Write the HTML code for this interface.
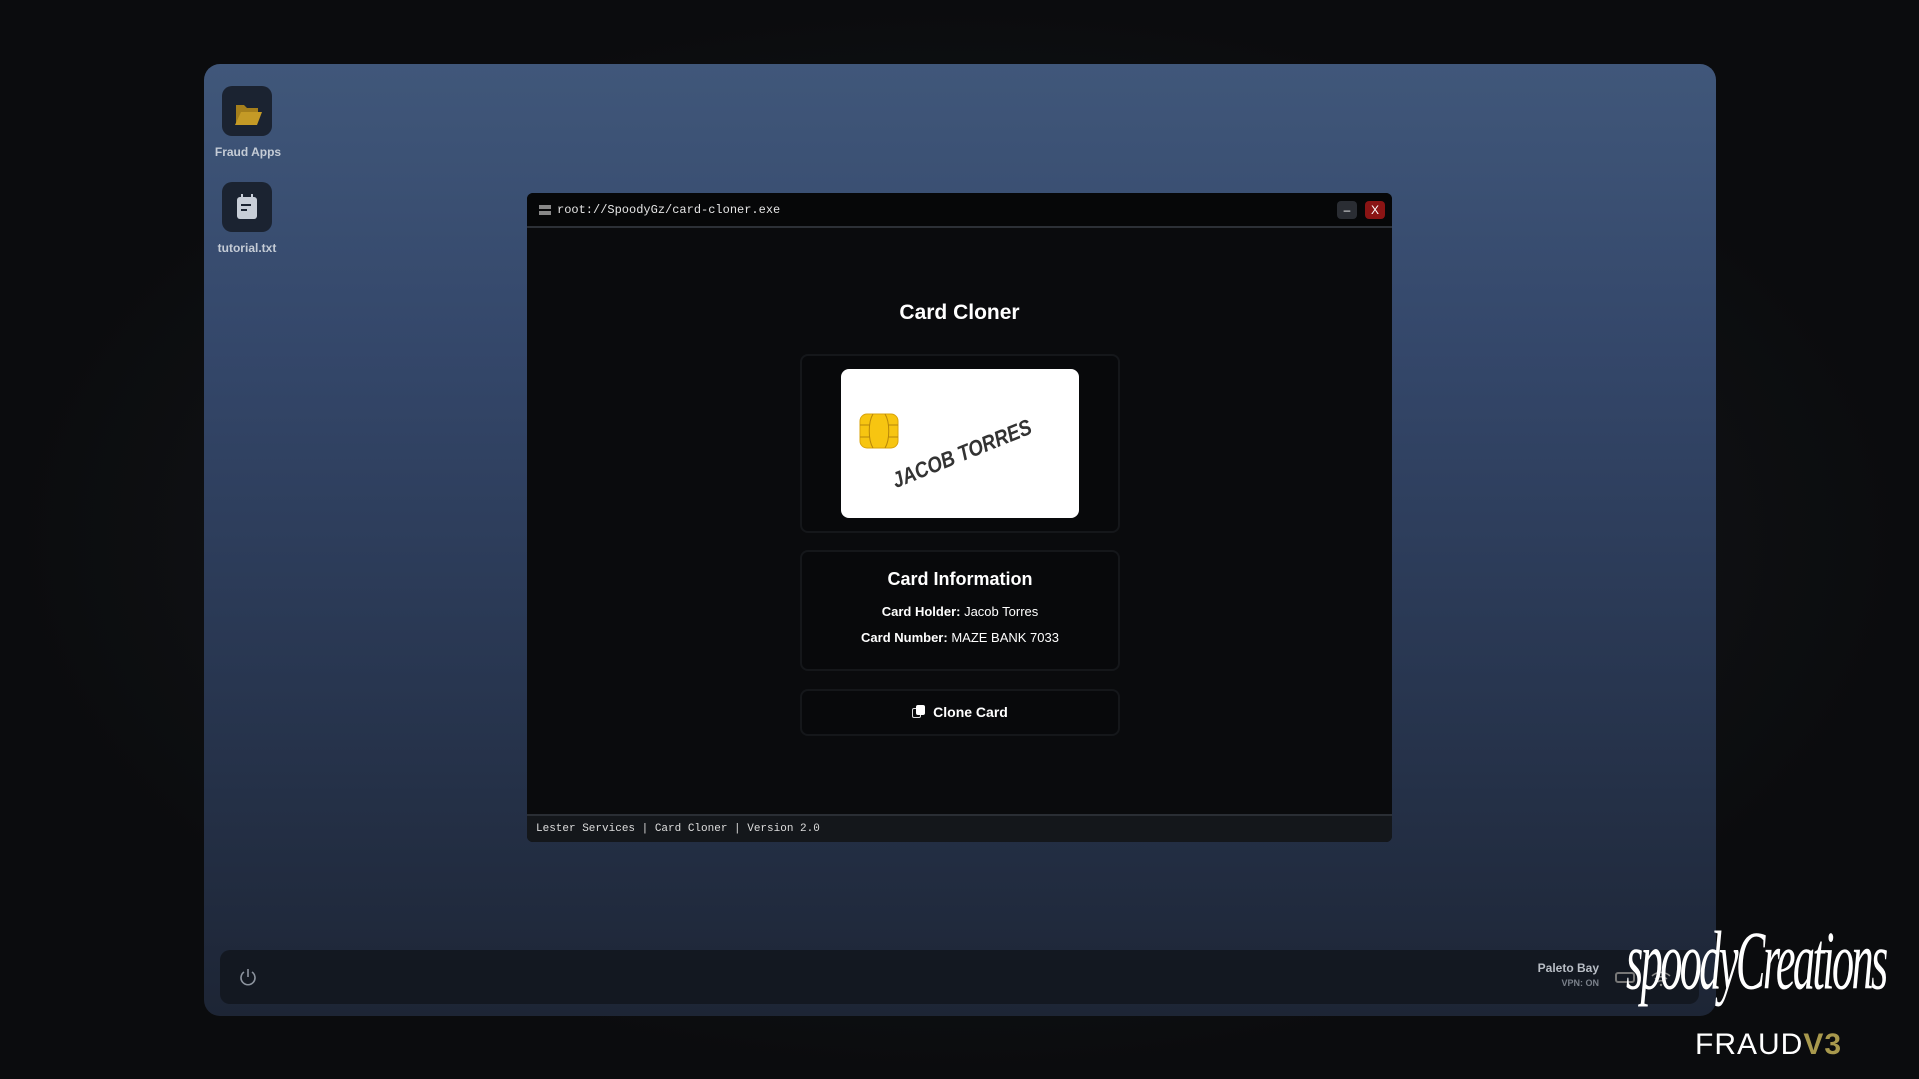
<!DOCTYPE html>
<html><head><meta charset="utf-8"><style>
*{margin:0;padding:0;box-sizing:border-box}
body{width:1919px;height:1079px;overflow:hidden;background:radial-gradient(ellipse at 50% 50%,#1a1d22 0%,#0b0c0e 70%);font-family:"Liberation Sans",sans-serif;position:relative}
.desk{position:absolute;left:204px;top:64px;width:1512px;height:952px;border-radius:16px;background:linear-gradient(180deg,#40577a 0%,#34476a 30%,#283650 65%,#1d2535 100%)}
.ic{position:absolute;width:50px;height:50px;border-radius:10px;background:#1b2331}
.lbl{position:absolute;color:#c5ccd6;font-weight:bold;font-size:12px;text-align:center;width:90px}
.win{position:absolute;left:527px;top:193px;width:865px;height:649px;background:#0a0b0d;border-radius:6px;overflow:hidden}
.tb{height:35px;background:#060708;border-bottom:2px solid #2c3036;display:flex;align-items:center;padding-left:12px;color:#e6e6e6;font-family:"Liberation Mono",monospace;font-size:12px}
.btn{position:absolute;top:8px;width:20px;height:18px;border-radius:4px;color:#fff;font-size:12px;text-align:center;line-height:18px}
.box{position:absolute;left:273px;width:320px;border:2px solid #15171a;border-radius:8px;background:#08090b}
.foot{position:absolute;left:0;bottom:0;width:100%;height:28px;background:#14171b;border-top:2px solid #2a2e34;color:#ddd;font-family:"Liberation Mono",monospace;font-size:11px;padding:7px 9px}
.task{position:absolute;left:220px;top:950px;width:1479px;height:54px;background:#131821;border-radius:10px}
</style></head><body>
<div class="desk"></div>
<div class="ic" style="left:222px;top:86px"><svg width="50" height="50"><path d="M14 19h8l3 3h11v4H20l-6 12z" fill="#a57f1c"/><path d="M19 26h21l-5 13H13z" fill="#c49a26"/></svg></div>
<div class="lbl" style="left:203px;top:145px">Fraud Apps</div>
<div class="ic" style="left:222px;top:182px"><svg width="50" height="50"><rect x="15" y="15" width="20" height="22" rx="3" fill="#c8ced8"/><rect x="19" y="12" width="2" height="5" fill="#c8ced8"/><rect x="29" y="12" width="2" height="5" fill="#c8ced8"/><rect x="19" y="22" width="10" height="2" fill="#1b2331"/><rect x="19" y="27" width="6" height="2" fill="#1b2331"/></svg></div>
<div class="lbl" style="left:202px;top:241px">tutorial.txt</div>
<div class="win">
 <div class="tb"><span style="display:inline-block;width:12px;height:10px;border-top:4px solid #888;border-bottom:4px solid #888;margin-right:6px"></span>root://SpoodyGz/card-cloner.exe</div>
 <div class="btn" style="left:810px;background:#2a2d33">–</div>
 <div class="btn" style="left:838px;background:#8a1414">X</div>
 <div style="position:absolute;top:108px;width:100%;text-align:center;color:#fff;font-weight:bold;font-size:21px">Card Cloner</div>
 <div class="box" style="top:161px;height:179px">
  <div style="position:absolute;left:39px;top:13px;width:238px;height:149px;background:#fff;border-radius:8px;overflow:hidden">
   <svg width="40" height="36" style="position:absolute;left:18px;top:44px"><rect x="1" y="1" width="38" height="34" rx="7" fill="#f7c511" stroke="#d9a30a"/><path d="M14 1c-5 8-5 26 0 34M26 1c5 8 5 26 0 34M1 12h10M1 24h10M29 12h10M29 24h10" stroke="#b7860a" fill="none"/></svg>
   <div style="position:absolute;left:0;width:238px;top:72px;text-align:center;transform:translateX(2px) rotate(-22deg) scaleX(0.85);transform-origin:center center;font-family:'Liberation Sans',sans-serif;font-style:italic;font-weight:bold;font-size:22px;line-height:26px;color:#333;white-space:nowrap">JACOB TORRES</div>
  </div>
 </div>
 <div class="box" style="top:357px;height:121px;text-align:center;color:#fff">
  <div style="font-weight:bold;font-size:18px;margin-top:17px">Card Information</div>
  <div style="font-size:13px;margin-top:14px"><b>Card Holder:</b> Jacob Torres</div>
  <div style="font-size:13px;margin-top:11px"><b>Card Number:</b> MAZE BANK 7033</div>
 </div>
 <div class="box" style="top:496px;height:47px;text-align:center;color:#fff;font-weight:bold;font-size:14px;line-height:43px"><span style="display:inline-block;width:13px;height:13px;position:relative;vertical-align:-1px;margin-right:8px"><span style="position:absolute;left:0;top:3px;width:9px;height:10px;border:1.5px solid #ddd;border-radius:2px"></span><span style="position:absolute;left:4px;top:0;width:9px;height:10px;background:#fff;border-radius:2px"></span></span>Clone Card</div>
 <div class="foot">Lester Services | Card Cloner | Version 2.0</div>
</div>
<div class="task">
 <svg width="20" height="20" style="position:absolute;left:18px;top:17px"><path d="M6 5a7 7 0 1 0 8 0" stroke="#8c939e" stroke-width="1.6" fill="none"/><path d="M10 2v8" stroke="#8c939e" stroke-width="1.6"/></svg>
 <div style="position:absolute;right:100px;top:11px;text-align:right;color:#b9bec6;font-weight:bold;font-size:12px">Paleto Bay<div style="font-size:9px;color:#7a808a;margin-top:3px">VPN: ON</div></div>
 <div style="position:absolute;left:1395px;top:22px;width:20px;height:11px;border:2px solid #777;border-radius:3px"></div>
 <svg width="22" height="18" style="position:absolute;left:1430px;top:19px"><path d="M2 7a13 13 0 0 1 18 0M5 10a9 9 0 0 1 12 0M8 13a4 4 0 0 1 6 0" stroke="#888" stroke-width="1.5" fill="none"/><circle cx="11" cy="16" r="1.2" fill="#888"/></svg>
</div>
<div style="position:absolute;left:1626px;top:915px;color:#fff;font-family:'Liberation Serif',serif;font-style:italic;font-size:52px;letter-spacing:-3px;transform:scale(0.85,1.6);transform-origin:left top;white-space:nowrap">spoodyCreations</div>
<div style="position:absolute;left:1695px;top:1028px;color:#fff;font-size:30px;letter-spacing:1px">FRAUD<b style="color:#a8994d">V3</b></div>
</body></html>
